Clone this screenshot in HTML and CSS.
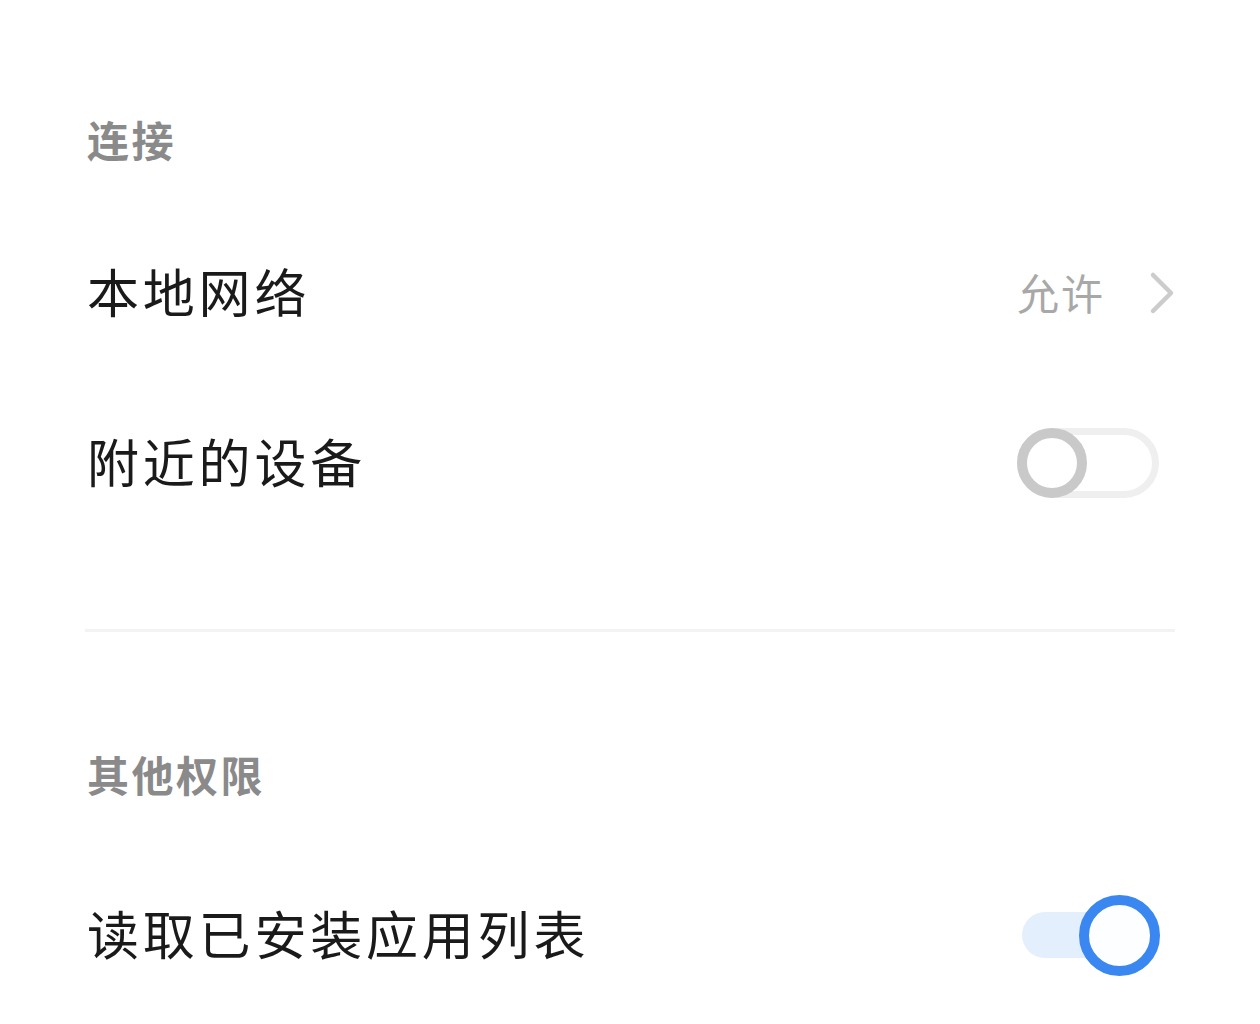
FILE: index.html
```html
<!DOCTYPE html>
<html lang="zh-CN">

<head>
    <meta charset="UTF-8">
    <meta name="viewport" content="width=device-width, initial-scale=1.0">
    <title>权限</title>
    <link rel="stylesheet" href="styles.css">
</head>

<body>
    <div class="page">
        <div class="section">
            <div class="section-title first">连接</div>
            <div class="row">
                <span class="row-label">本地网络</span>
                <div class="row-value">
                    <span class="value-text">允许</span>
                    <svg class="chevron" width="26" height="44" viewBox="0 0 26 44">
                        <polyline points="4,4 22,22 4,40" fill="none" stroke="#cccccc" stroke-width="4.5" stroke-linecap="round" stroke-linejoin="round" />
                    </svg>
                </div>
            </div>
            <div class="row">
                <span class="row-label">附近的设备</span>
                <div class="switch switch-off">
                    <div class="switch-knob"></div>
                </div>
            </div>
        </div>

        <div class="divider"></div>

        <div class="section">
            <div class="section-title second">其他权限</div>
            <div class="row">
                <span class="row-label">读取已安装应用列表</span>
                <div class="switch switch-on">
                    <div class="switch-track"></div>
                    <div class="switch-knob"></div>
                </div>
            </div>
        </div>
    </div>
</body>

</html>
```

FILE: styles.css
```css
body {
    margin: 0;
    padding: 0;
    background-color: #ffffff;
    font-family: "Noto Sans CJK SC", "Noto Sans", sans-serif;
    color: #1a1a1a;
}

.page {
    padding: 0 85px;
}

.section-title {
    font-size: 42px;
    line-height: 82px;
    font-weight: 700;
    color: #8a8a8a;
    letter-spacing: 2.5px;
    padding-left: 2px;
}

.section-title.first {
    padding-top: 98px;
    padding-bottom: 28px;
}

.section-title.second {
    padding-top: 101px;
    padding-bottom: 35px;
}

.row {
    height: 170px;
    display: flex;
    align-items: center;
    justify-content: space-between;
}

.row-label {
    font-size: 52px;
    letter-spacing: 3.8px;
    padding-left: 2px;
    margin-bottom: 6px;
    color: #1a1a1a;
}

.row-value {
    display: flex;
    align-items: center;
    gap: 44px;
}

.value-text {
    font-size: 42px;
    letter-spacing: 2px;
    margin-bottom: 4px;
    color: #a8a8a8;
}

.chevron {
    display: block;
}

.divider {
    height: 3px;
    background-color: #f3f3f3;
    margin-top: 81px;
}

.switch {
    position: relative;
    box-sizing: border-box;
}

.switch-off {
    width: 142px;
    height: 70px;
    border: 7px solid #efefef;
    border-radius: 35px;
    margin-right: 16px;
}

.switch-off .switch-knob {
    position: absolute;
    left: -7px;
    top: -7px;
    width: 70px;
    height: 70px;
    box-sizing: border-box;
    border: 10px solid #c9c9c9;
    border-radius: 50%;
    background-color: #ffffff;
}

.switch-on {
    width: 138px;
    height: 81px;
    margin-right: 15px;
    display: flex;
    align-items: center;
}

.switch-on .switch-track {
    width: 118px;
    height: 46px;
    border-radius: 23px;
    background-color: #e4effd;
}

.switch-on .switch-knob {
    position: absolute;
    right: 0;
    top: 0;
    width: 81px;
    height: 81px;
    box-sizing: border-box;
    border: 10px solid #3b87f2;
    border-radius: 50%;
    background-color: #fdfeff;
}
```
